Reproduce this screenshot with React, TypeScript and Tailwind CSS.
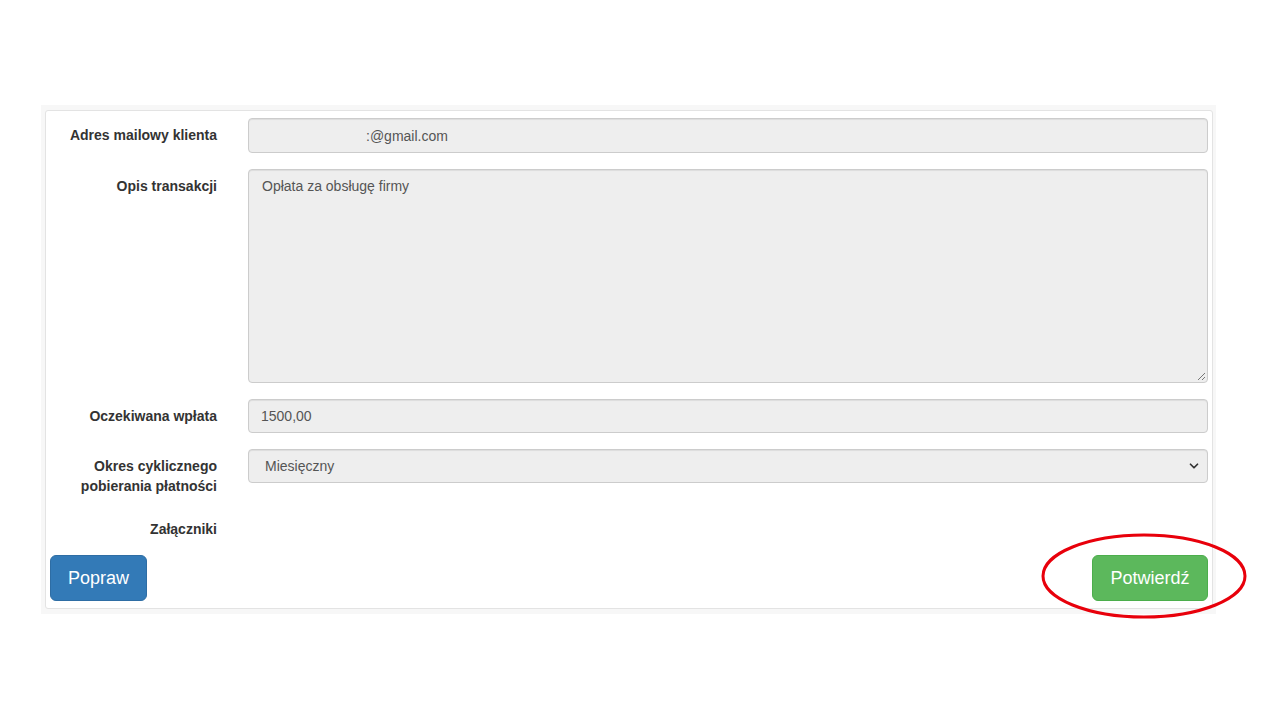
import { ChevronDown } from "lucide-react";

const font = { fontFamily: '"Liberation Sans", Arial, sans-serif' };

function Label({ children }: { children: React.ReactNode }) {
  return (
    <div className="w-[167px] shrink-0 pt-[7px] text-right text-[14px] leading-[20px] font-bold text-[#333]">
      {children}
    </div>
  );
}

const field =
  "flex-1 ml-[31px] bg-[#eeeeee] border border-[#cccccc] rounded-[4px] text-[14px] leading-[20px] text-[#555] shadow-[inset_0_1px_1px_rgba(0,0,0,0.075)]";

export default function App() {
  return (
    <div className="relative w-[1280px] h-[720px] bg-white overflow-hidden" style={font}>
      <div className="pt-[105px] pl-[41px]">
        <div className="w-[1175px] bg-[#f7f7f7] pl-[4px] pr-[3px] py-[5px]">
          <div className="bg-white border border-[#e3e3e3] rounded-[3px] px-[4px] pt-[7px] pb-[7px]">
            <div className="flex flex-col gap-[16px]">
              <div className="flex">
                <Label>Adres mailowy klienta</Label>
                <div className={`${field} h-[35px] pl-[117px] pt-[7px]`}>:@gmail.com</div>
              </div>
              <div className="flex">
                <Label>Opis transakcji</Label>
                <div className={`${field} relative h-[214px] px-[13px] pt-[6px]`}>
                  Opłata za obsługę firmy
                  <svg className="absolute right-[1px] bottom-[1px]" width="10" height="10" viewBox="0 0 10 10">
                    <path d="M9 2 L2 9 M9 6 L6 9" stroke="#777" strokeWidth="1" />
                  </svg>
                </div>
              </div>
              <div className="flex">
                <Label>Oczekiwana wpłata</Label>
                <div className={`${field} h-[34px] px-[12px] pt-[6px]`}>1500,00</div>
              </div>
              <div className="flex">
                <Label>
                  Okres cyklicznego
                  <br />
                  pobierania płatności
                </Label>
                <div className={`${field} h-[34px] flex items-center justify-between pl-[16px] pr-[6px]`}>
                  <span>Miesięczny</span>
                  <ChevronDown size={14} strokeWidth={3} className="text-[#333]" />
                </div>
              </div>
              <div className="flex">
                <Label>Załączniki</Label>
              </div>
            </div>
            <div className="flex justify-between mt-[16px]">
              <button className="w-[97px] h-[46px] bg-[#337ab7] border border-[#2e6da4] rounded-[6px] text-white text-[18px]">
                Popraw
              </button>
              <button className="w-[116px] h-[46px] bg-[#5cb85c] border border-[#4cae4c] rounded-[6px] text-white text-[18px]">
                Potwierdź
              </button>
            </div>
          </div>
        </div>
      </div>
      <svg className="absolute left-[1040px] top-[532px]" width="210" height="90" viewBox="0 0 210 90">
        <ellipse cx="104" cy="44" rx="101" ry="41" fill="none" stroke="#e8000b" strokeWidth="3" />
      </svg>
    </div>
  );
}
